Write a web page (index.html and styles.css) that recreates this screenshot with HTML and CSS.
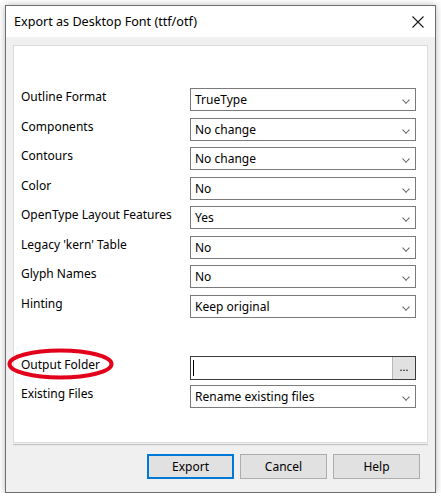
FILE: index.html
```html
<!DOCTYPE html>
<html>
<head>
<meta charset="utf-8">
<link rel="stylesheet" href="styles.css">
</head>
<body>
<div class="window">
  <div class="titlebar">
    <span class="title">Export as Desktop Font (ttf/otf)</span>
    <svg class="close" width="12" height="12" viewBox="0 0 12 12"><path d="M0.5 0.5 L11.5 11.5 M11.5 0.5 L0.5 11.5" stroke="#1a1a1a" stroke-width="1.1" fill="none"/></svg>
  </div>
  <div class="body">
    <div class="panel">
      <div class="rows">
        <div class="row"><span class="label">Outline Format</span><div class="select">TrueType<span class="chev"></span></div></div>
        <div class="row"><span class="label">Components</span><div class="select">No change<span class="chev"></span></div></div>
        <div class="row"><span class="label">Contours</span><div class="select">No change<span class="chev"></span></div></div>
        <div class="row"><span class="label">Color</span><div class="select">No<span class="chev"></span></div></div>
        <div class="row"><span class="label">OpenType Layout Features</span><div class="select">Yes<span class="chev"></span></div></div>
        <div class="row"><span class="label">Legacy 'kern' Table</span><div class="select">No<span class="chev"></span></div></div>
        <div class="row"><span class="label">Glyph Names</span><div class="select">No<span class="chev"></span></div></div>
        <div class="row"><span class="label">Hinting</span><div class="select">Keep original<span class="chev"></span></div></div>
      </div>
      <div class="rows rows2">
        <div class="row"><span class="label folder">Output Folder
          <svg class="ring" width="110" height="34" viewBox="0 0 110 34"><ellipse cx="54.5" cy="16" rx="51" ry="13.5" stroke="#e3001b" stroke-width="4" fill="none"/></svg>
        </span><div class="input"><span class="caret"></span><span class="browse">...</span></div></div>
        <div class="row"><span class="label">Existing Files</span><div class="select">Rename existing files<span class="chev"></span></div></div>
      </div>
    </div>
    <div class="sep"></div>
    <div class="buttons">
      <div class="btn default">Export</div>
      <div class="btn">Cancel</div>
      <div class="btn">Help</div>
    </div>
  </div>
</div>
</body>
</html>
```
FILE: styles.css
```css
html, body {
  margin: 0;
  padding: 0;
  background: #ffffff;
}
body {
  padding: 5px 0 0 5px;
  font-family: "Noto Sans", "Open Sans", sans-serif;
  font-size: 12px;
  color: #000;
}
.window {
  width: 429px;
  height: 486px;
  border: 1px solid #6e6e6e;
  box-shadow: 0 0 7px rgba(0,0,0,0.28);
  display: flex;
  flex-direction: column;
  background: #f0f0f0;
}
.titlebar {
  height: 31px;
  background: #fff;
  display: flex;
  align-items: center;
  justify-content: space-between;
  padding: 0 11px 0 8px;
  flex: none;
}
.title {
  font-size: 12.6px;
  line-height: 16px;
}
.close {
  display: block;
  margin-top: 1px;
}
.body {
  flex: 1;
  display: flex;
  flex-direction: column;
  padding: 8px 7px 0 7px;
}
.panel {
  background: #fff;
  border: 1px solid #dcdcdc;
  height: 398px;
  box-sizing: border-box;
  padding: 42px 11px 0 7px;
}
.rows {
  display: flex;
  flex-direction: column;
  gap: 6.5px;
}
.rows2 {
  margin-top: 38px;
}
.row {
  display: grid;
  grid-template-columns: 169px 226px;
  align-items: start;
  height: 23px;
}
.label {
  line-height: 16px;
  padding-top: 1px;
  position: relative;
}
.folder .ring {
  position: absolute;
  left: -15px;
  top: -8px;
}
.select {
  position: relative;
  height: 23px;
  box-sizing: border-box;
  border: 1px solid #7a7a7a;
  background: #fff;
  line-height: 21px;
  padding-left: 4px;
}
.chev {
  position: absolute;
  right: 6px;
  top: 8px;
  width: 5px;
  height: 5px;
  border-right: 1px solid #5a5a5a;
  border-bottom: 1px solid #5a5a5a;
  transform: rotate(45deg) scale(0.9, 0.9);
  transform-origin: center;
}
.input {
  position: relative;
  height: 24px;
  box-sizing: border-box;
  border: 1px solid #3c3c3c;
  background: #fff;
  display: flex;
  align-items: stretch;
  justify-content: space-between;
}
.caret {
  width: 1px;
  background: #000;
  margin: 3px 0 3px 2px;
}
.browse {
  width: 22px;
  background: #e1e1e1;
  border-left: 1px solid #b8b8b8;
  text-align: center;
  font-size: 11px;
  line-height: 20px;
  color: #000;
}
.sep {
  margin-top: 1px;
  border-top: 1px solid #c4c4c4;
  border-bottom: 1px solid #e8e8e8;
}
.buttons {
  display: flex;
  justify-content: flex-end;
  gap: 6px;
  padding: 8px 8px 0 0;
}
.btn {
  width: 87px;
  height: 25px;
  box-sizing: border-box;
  border: 1px solid #adadad;
  background: #e1e1e1;
  text-align: center;
  line-height: 23px;
}
.btn.default {
  border-color: #0078d7;
  box-shadow: inset 0 0 0 1px #0078d7;
}
```
